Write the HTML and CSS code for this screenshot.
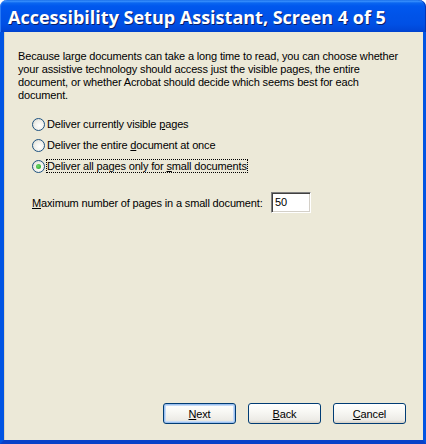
FILE: index.html
```html
<!DOCTYPE html>
<html>
<head>
<meta charset="utf-8">
<link rel="stylesheet" href="styles.css">
</head>
<body>
<div class="window">
  <div class="titlebar"><span class="title">Accessibility Setup Assistant, Screen 4 of 5</span></div>
  <div class="frame">
    <div class="content">
      <p class="intro">Because large documents can take a long time to read, you can choose whether your assistive technology should access just the visible pages, the entire document, or whether Acrobat should decide which seems best for each document.</p>
      <div class="options">
        <label class="opt"><span class="radio"></span><span>Deliver currently visible <u>p</u>ages</span></label>
        <label class="opt"><span class="radio"></span><span>Deliver the entire <u>d</u>ocument at once</span></label>
        <label class="opt"><span class="radio checked"></span><span class="focus">Deliver all pages only for <u>s</u>mall documents</span></label>
      </div>
      <div class="field">
        <span class="flabel"><u>M</u>aximum number of pages in a small document:</span>
        <span class="input">50</span>
      </div>
    </div>
    <div class="buttons">
      <button class="btn default"><u>N</u>ext</button>
      <button class="btn"><u>B</u>ack</button>
      <button class="btn"><u>C</u>ancel</button>
    </div>
  </div>
</div>
</body>
</html>
```
FILE: styles.css
```css
html, body { margin: 0; padding: 0; background: #fff; }
.window { width: 426px; height: 444px; display: flex; flex-direction: column; font-family: "Liberation Sans", Arial, sans-serif; font-size: 11px; letter-spacing: -0.15px; color: #000; }
.titlebar {
  height: 32px; flex: none; border-radius: 7px 7px 0 0;
  background: linear-gradient(to bottom, #0a5fe0 0px, #3d95ff 1px, #0a66f0 3px, #0058ee 6px, #0053e8 16px, #0050e5 24px, #0047d8 30px, #0042cc 32px);
  box-shadow: inset 1px 0 0 #2a7af5, inset -1px 0 0 #0036b8;
  display: flex; align-items: center; padding-left: 8px; box-sizing: border-box;
}
.title { color: #fff; font-family: "Open Sans", "DejaVu Sans", sans-serif; font-weight: 700; font-size: 18px; letter-spacing: 0; text-shadow: 1px 1px 0 #0a1e6a; padding-top: 1px; }
.frame {
  flex: 1; display: flex; flex-direction: column; background: #ece9d8;
  border-left: 4px solid #0054e3; border-right: 3px solid #0054e3; border-bottom: 4px solid #0841c8;
  box-shadow: inset 1px 0 0 #d8d4c0;
}
.content { flex: 1; padding: 18px 14px 0 14px; }
.intro { margin: 0; line-height: 13px; }
.options { margin-top: 15px; padding-left: 14px; display: flex; flex-direction: column; gap: 7px; }
.opt { display: flex; align-items: center; height: 14px; gap: 2px; }
.radio { width: 11px; height: 11px; border-radius: 50%; border: 1px solid #1c5180; background: radial-gradient(circle at 60% 60%, #fff 0, #f0f0ea 50%, #d4d2c8 100%); position: relative; flex: none; }
.radio.checked::after { content: ""; position: absolute; left: 3px; top: 3px; width: 5px; height: 5px; border-radius: 50%; background: radial-gradient(circle at 40% 40%, #6fd86a, #21a121); }
.focus { outline: 1px dotted #000; outline-offset: 0; }
.field { margin-top: 19px; padding-left: 14px; display: flex; align-items: center; }
.flabel { width: 239px; }
.input { width: 35px; height: 19px; border-style: solid; border-width: 1px; border-color: #808080 #fff #fff #808080; box-shadow: inset 1px 1px 0 #404040, inset -1px -1px 0 #d4d0c8; background: #fff; line-height: 19px; padding-left: 3px; box-sizing: content-box; }
.buttons { display: flex; justify-content: flex-end; gap: 12px; padding: 0 17px 16px 0; }
.btn {
  width: 73px; height: 21px; font-family: "Liberation Sans", Arial, sans-serif; font-size: 11px; letter-spacing: -0.15px; color: #000;
  border: 1px solid #003c74; border-radius: 3px; background: linear-gradient(to bottom, #ffffff 0%, #f8f8f4 40%, #ecebe6 85%, #d6d0c5 100%); padding: 0;
}
.btn.default { box-shadow: inset 0 0 0 1px #9cc0f0, inset 0 0 0 2px #c4dbf7; }
```
